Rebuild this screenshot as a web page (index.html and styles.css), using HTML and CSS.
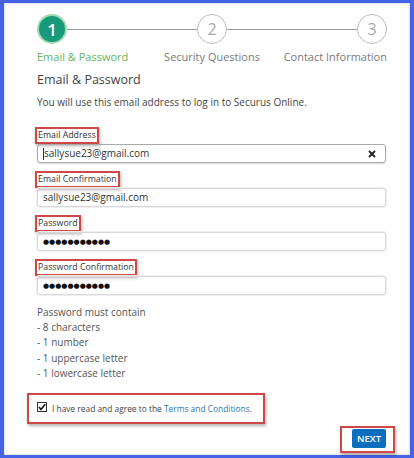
FILE: index.html
```html
<!DOCTYPE html>
<html>
<head>
<meta charset="utf-8">
<link rel="stylesheet" href="styles.css">
</head>
<body>
<div class="frame">
  <div class="stepper">
    <div class="circle active">1</div>
    <div class="line"></div>
    <div class="circle">2</div>
    <div class="line"></div>
    <div class="circle">3</div>
  </div>
  <div class="step-labels">
    <span class="sl first active-label">Email &amp; Password</span>
    <span class="sl mid">Security Questions</span>
    <span class="sl last">Contact Information</span>
  </div>
  <h2 class="title">Email &amp; Password</h2>
  <p class="desc">You will use this email address to log in to Securus Online.</p>

  <div class="form">
    <div class="group">
      <span class="lbl">Email Address</span>
      <div class="field focused"><span class="caret"></span>sallysue23@gmail.com
        <svg class="clear" width="8" height="8" viewBox="0 0 8 8"><path d="M1 1L7 7M7 1L1 7" stroke="#222" stroke-width="1.8"/></svg>
      </div>
    </div>
    <div class="group">
      <span class="lbl">Email Confirmation</span>
      <div class="field">sallysue23@gmail.com</div>
    </div>
    <div class="group">
      <span class="lbl">Password</span>
      <div class="field dots">●●●●●●●●●●●</div>
    </div>
    <div class="group">
      <span class="lbl">Password Confirmation</span>
      <div class="field dots">●●●●●●●●●●●</div>
    </div>
  </div>

  <div class="rules">
    <div>Password must contain</div>
    <div>- 8 characters</div>
    <div>- 1 number</div>
    <div>- 1 uppercase letter</div>
    <div>- 1 lowercase letter</div>
  </div>

  <div class="agree">
    <svg class="check" width="10" height="10" viewBox="0 0 10 10"><rect x="0.5" y="0.5" width="9" height="9" fill="#fff" stroke="#333"/><path d="M2 5L4 7.5L8.2 2.2" fill="none" stroke="#111" stroke-width="1.6"/></svg>
    <span class="agree-text">I have read and agree to the <a class="link">Terms and Conditions</a>.</span>
  </div>

  <div class="actions">
    <div class="next-box"><button class="next">NEXT</button></div>
  </div>
</div>
</body>
</html>
```
FILE: styles.css
```css
html, body {
  margin: 0;
  padding: 0;
  background: #fff;
}
body {
  width: 414px;
  height: 458px;
  overflow: hidden;
  font-family: "Open Sans", "DejaVu Sans", sans-serif;
  color: #444;
}
.frame {
  box-sizing: border-box;
  width: 414px;
  height: 458px;
  border-style: solid;
  border-color: #4563e6;
  border-width: 3px 4px 3px 4px;
  padding: 11px 23px 0 33px;
  box-shadow: inset 0 0 3px rgba(0,0,0,0.25);
  display: flex;
  flex-direction: column;
}
.stepper {
  display: flex;
  align-items: center;
  height: 30px;
}
.circle {
  box-sizing: border-box;
  width: 30px;
  height: 30px;
  border-radius: 50%;
  border: 1px solid #bdbdbd;
  color: #a8a8a8;
  font-size: 16px;
  display: flex;
  align-items: center;
  justify-content: center;
  background: #fff;
}
.circle.active {
  background: #18997a;
  border: 2px solid #a3dbb1;
  color: #fff;
  font-weight: 600;
  font-size: 17px;
}
.line {
  flex: 1;
  height: 1px;
  background: #9a9a9a;
}
.step-labels {
  display: grid;
  grid-template-columns: 1fr auto 1fr;
  margin-top: 5px;
  line-height: 16px;
  font-size: 11px;
  color: #7a7a7a;
}
.sl.first { justify-self: start; }
.sl.last { justify-self: end; }
.active-label { color: #62b65a; }
.title {
  margin: 5px 0 0;
  font-size: 12.5px;
  font-weight: 400;
  line-height: 20px;
  color: #444;
}
.desc {
  margin: 4px 0 0;
  font-size: 10px;
  line-height: 16px;
  color: #444;
}
.form {
  margin-top: 17px;
  display: flex;
  flex-direction: column;
  gap: 8px;
}
.group {
  display: flex;
  flex-direction: column;
  align-items: flex-start;
}
.lbl {
  box-sizing: border-box;
  height: 17px;
  margin-left: -2px;
  padding: 0 1px;
  border: 2px solid #cf4747;
  box-shadow: 1px 2px 3px rgba(0,0,0,0.3);
  font-size: 8.8px;
  line-height: 13px;
  color: #333;
}
.field {
  position: relative;
  box-sizing: border-box;
  width: 349px;
  height: 19px;
  border: 1px solid #d8d8d8;
  box-shadow: 0 0 0 1px #efefef;
  border-radius: 3px;
  padding-left: 5px;
  font-size: 10px;
  line-height: 17px;
  color: #333;
  display: flex;
  align-items: center;
}
.field.focused {
  border-color: #a9a9a9;
  box-shadow: 0 1px 2px rgba(0,0,0,0.15);
}
.caret {
  display: inline-block;
  width: 1px;
  height: 12px;
  background: #333;
}
.clear {
  position: absolute;
  right: 9px;
  top: 5px;
}
.dots {
  font-size: 7px;
  letter-spacing: 0;
  color: #111;
}
.rules {
  margin-top: 10px;
  font-size: 10px;
  line-height: 15.2px;
  color: #555;
}
.agree {
  box-sizing: border-box;
  margin-top: 12px;
  margin-left: -10px;
  width: 238px;
  height: 31px;
  border: 2px solid #cf4747;
  box-shadow: 1px 2px 3px rgba(0,0,0,0.3);
  padding: 0 8px;
  display: flex;
  align-items: center;
  gap: 5px;
}
.check {
  flex: none;
  margin-top: -3px;
}
.agree-text {
  font-size: 8.4px;
  line-height: 15px;
  color: #444;
  white-space: nowrap;
}
.link {
  color: #2676b8;
  text-decoration: none;
}
.actions {
  display: flex;
  justify-content: flex-end;
  margin-top: 2px;
  margin-right: -8px;
}
.next-box {
  box-sizing: border-box;
  border: 2px solid #cf4747;
  box-shadow: 1px 2px 3px rgba(0,0,0,0.3);
  padding: 1px 7px 3px 10px;
  display: flex;
}
.next {
  width: 34px;
  height: 19px;
  border: none;
  border-radius: 2px;
  background: #0b6fbe;
  color: #fff;
  font-family: "Open Sans", sans-serif;
  font-size: 9.5px;
  font-weight: 600;
  padding: 0;
}
```
